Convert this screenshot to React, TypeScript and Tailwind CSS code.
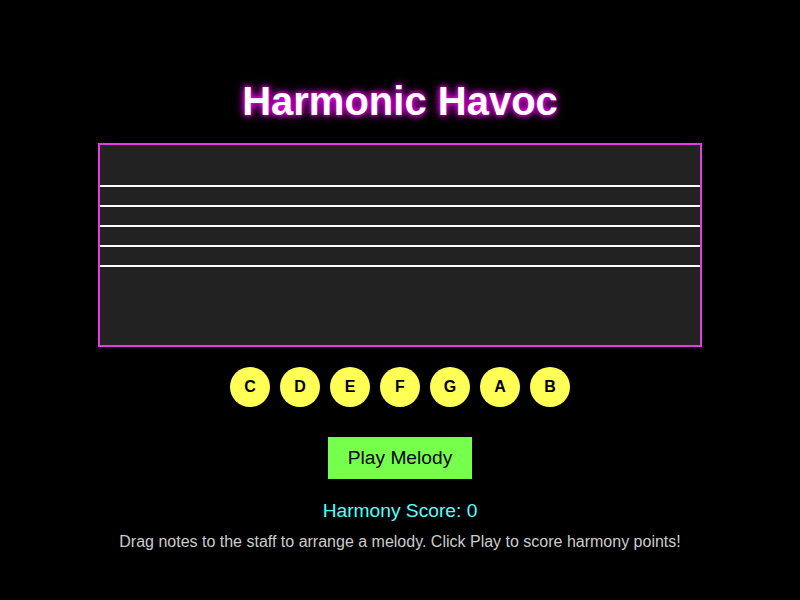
import React from 'react';

const NOTES = ['C', 'D', 'E', 'F', 'G', 'A', 'B'];

export default function App() {
  return (
    <div
      className="min-h-screen w-full bg-black flex flex-col items-center pt-[78px]"
      style={{ fontFamily: '"Liberation Sans", Arial, sans-serif' }}
    >
      <h1 className="text-[40px] leading-[46px] font-bold text-white mb-[19px] [text-shadow:0_0_10px_#ff00ff,0_0_5px_#ff00ff]">
        Harmonic Havoc
      </h1>

      {/* staff */}
      <div className="w-[604px] h-[204px] border-2 border-[#e23de2] bg-[#222222] flex flex-col pt-[40px] gap-[18px]">
        {[0, 1, 2, 3, 4].map((i) => (
          <div key={i} className="h-[2px] w-full bg-white" />
        ))}
      </div>

      <div className="flex gap-[10px] mt-[20px]">
        {NOTES.map((n) => (
          <div
            key={n}
            className="w-[40px] h-[40px] rounded-full bg-[#ffff55] flex items-center justify-center text-black font-bold text-[16px]"
          >
            {n}
          </div>
        ))}
      </div>

      <button className="mt-[30px] h-[42px] px-[20px] bg-[#77ff4d] text-black text-[19.2px] leading-[22px]">
        Play Melody
      </button>

      <p className="mt-[21px] text-[19.2px] leading-[22px] text-[#55ffff]">Harmony Score: 0</p>
      <p className="mt-[11px] text-[16px] leading-[18px] text-[#cccccc]">
        Drag notes to the staff to arrange a melody. Click Play to score harmony points!
      </p>
    </div>
  );
}
